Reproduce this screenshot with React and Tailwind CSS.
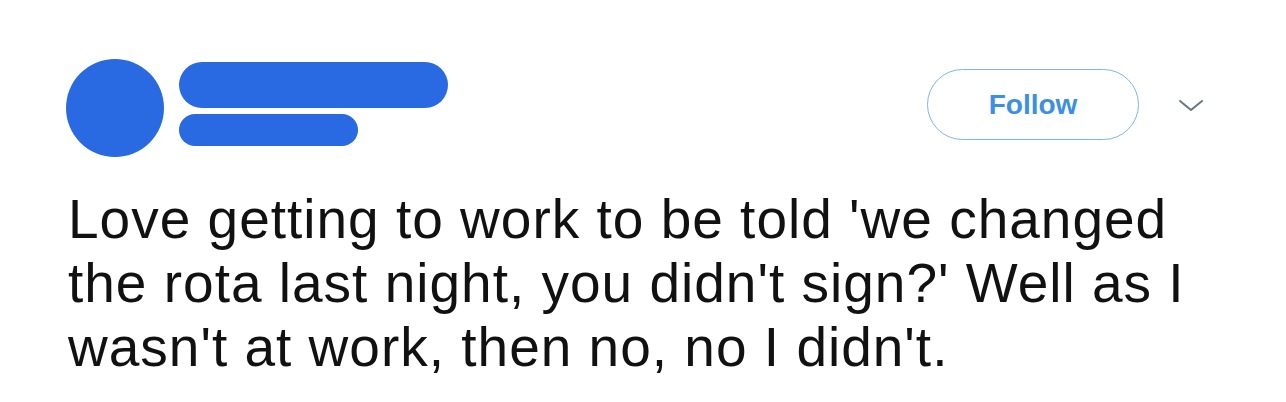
import React from "react";

function Chevron() {
  return (
    <svg width="26" height="14" viewBox="0 0 26 14" fill="none">
      <path d="M2 3 L13 12 L24 3" stroke="#657786" strokeWidth="2" strokeLinecap="round" strokeLinejoin="round" />
    </svg>
  );
}

export default function App() {
  return (
    <div className="w-[1286px] h-[402px] bg-white pl-[66px] pr-[82px] pt-[59px] font-['Liberation_Sans',Arial,sans-serif]">
      <div className="flex items-start">
        <div className="w-[98px] h-[98px] rounded-full bg-[#2969e1]" />
        <div className="ml-[15px] mt-[3px] flex flex-col gap-[6px]">
          <div className="w-[269px] h-[46px] rounded-full bg-[#2969e1]" />
          <div className="w-[179px] h-[32px] rounded-full bg-[#2969e1]" />
        </div>
        <div className="ml-auto mt-[10px] flex items-center">
          <button className="w-[212px] h-[71px] rounded-full border border-[#7fb5ee] text-[#3d8fe3] text-[28px] font-bold">
            Follow
          </button>
          <div className="ml-[39px]">
            <Chevron />
          </div>
        </div>
      </div>
      <p className="mt-[30px] ml-[2px] text-[55px] leading-[64px] tracking-[1px] text-[#111111] whitespace-nowrap">
        Love getting to work to be told 'we changed
        <br />
        the rota last night, you didn't sign?' Well as I
        <br />
        wasn't at work, then no, no I didn't.
      </p>
    </div>
  );
}
